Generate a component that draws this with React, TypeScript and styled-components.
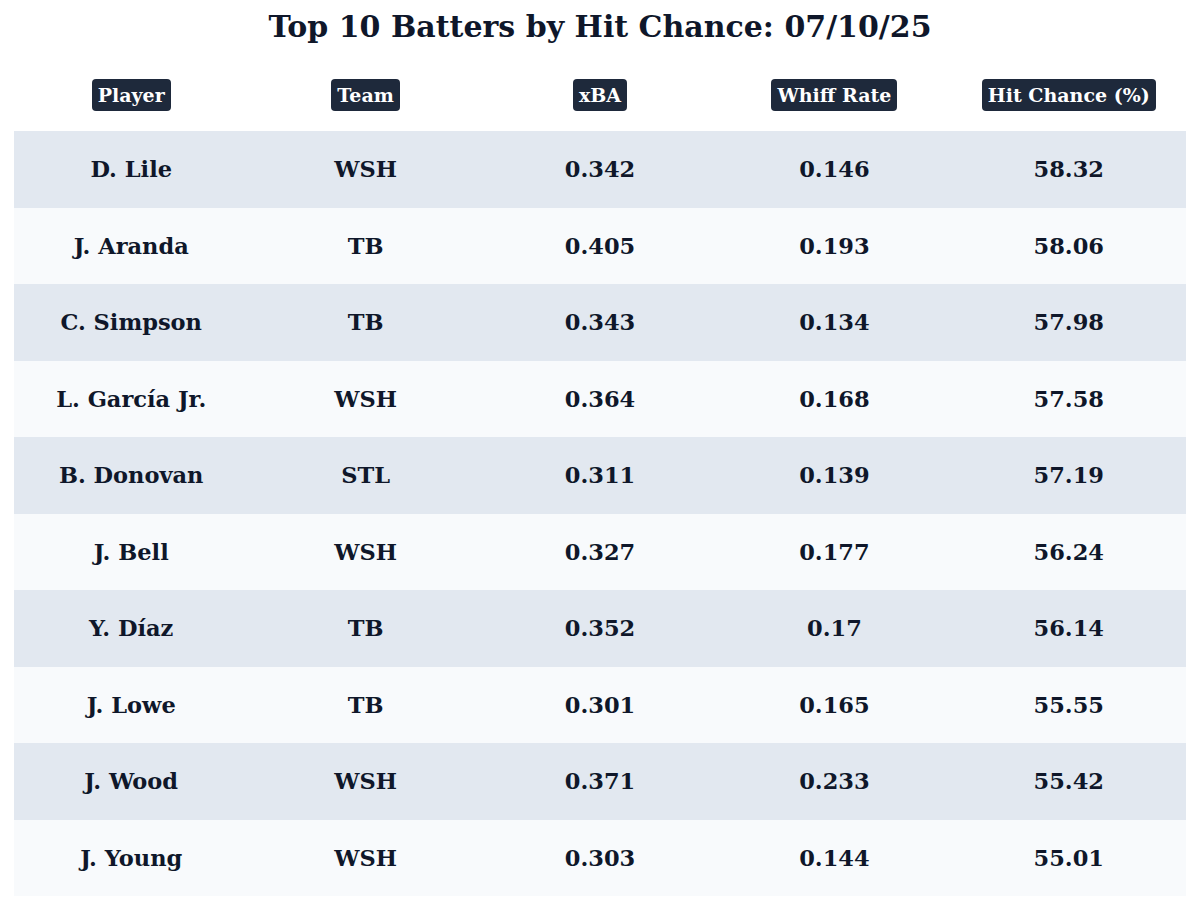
import styled, { createGlobalStyle } from 'styled-components';

const GlobalStyle = createGlobalStyle`
  html, body {
    margin: 0;
    padding: 0;
    background: #ffffff;
  }
  body {
    font-family: 'DejaVu Serif', 'Liberation Serif', serif;
    color: #0f172a;
  }
`;

const Page = styled.div`
  width: 1200px;
  height: 910px;
  box-sizing: border-box;
  padding: 0 14px;
  display: flex;
  flex-direction: column;
`;

const Title = styled.h1`
  margin: 0;
  height: 52px;
  display: flex;
  align-items: center;
  justify-content: center;
  font-size: 30px;
  font-weight: 700;
  color: #0f172a;
`;

const Grid = styled.div`
  display: grid;
  grid-template-columns: repeat(5, 1fr);
`;

const HeadCell = styled.div`
  height: 79px;
  box-sizing: border-box;
  padding-bottom: 20px;
  display: flex;
  align-items: flex-end;
  justify-content: center;
`;

const Pill = styled.span`
  background: #1e293b;
  color: #ffffff;
  font-size: 19px;
  font-weight: 700;
  line-height: 32px;
  padding: 0 6px;
  border-radius: 4px;
`;

const Row = styled.div<{ $shade: boolean }>`
  display: contents;
  & > div {
    background: ${(p) => (p.$shade ? '#e2e8f0' : '#f8fafc')};
  }
`;

const Cell = styled.div`
  height: 76.5px;
  display: flex;
  align-items: center;
  justify-content: center;
  font-size: 22.5px;
  font-weight: 700;
  color: #0f172a;
`;

const columns = ['Player', 'Team', 'xBA', 'Whiff Rate', 'Hit Chance (%)'];

const batters = [
  ['D. Lile', 'WSH', '0.342', '0.146', '58.32'],
  ['J. Aranda', 'TB', '0.405', '0.193', '58.06'],
  ['C. Simpson', 'TB', '0.343', '0.134', '57.98'],
  ['L. García Jr.', 'WSH', '0.364', '0.168', '57.58'],
  ['B. Donovan', 'STL', '0.311', '0.139', '57.19'],
  ['J. Bell', 'WSH', '0.327', '0.177', '56.24'],
  ['Y. Díaz', 'TB', '0.352', '0.17', '56.14'],
  ['J. Lowe', 'TB', '0.301', '0.165', '55.55'],
  ['J. Wood', 'WSH', '0.371', '0.233', '55.42'],
  ['J. Young', 'WSH', '0.303', '0.144', '55.01'],
];

const App = () => {
  return (
    <>
      <GlobalStyle />
      <Page>
        <Title>Top 10 Batters by Hit Chance: 07/10/25</Title>
        <Grid>
          {columns.map((col) => (
            <HeadCell key={col}>
              <Pill>{col}</Pill>
            </HeadCell>
          ))}
          {batters.map((row, i) => (
            <Row key={row[0]} $shade={i % 2 === 0}>
              {row.map((value, j) => (
                <Cell key={j}>{value}</Cell>
              ))}
            </Row>
          ))}
        </Grid>
      </Page>
    </>
  );
};

export default App;
